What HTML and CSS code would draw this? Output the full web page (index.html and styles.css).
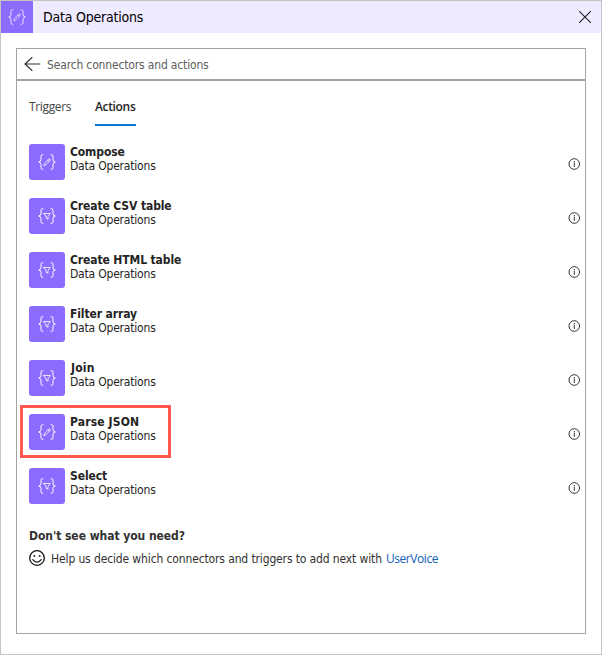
FILE: index.html
```html
<!DOCTYPE html>
<html lang="en">
<head>
<meta charset="utf-8">
<title>Data Operations</title>
<link rel="stylesheet" href="styles.css">
</head>
<body>
<svg class="defs" width="0" height="0" aria-hidden="true">
  <symbol id="braces" viewBox="0 0 18 16"><path d="M5 .7H4.500Q3 .7 3 2.300V5.500Q3 7.700.7 8Q3 8.300 3 10.500V13.700Q3 15.300 4.500 15.300H5M13 .7H13.500Q15 .7 15 2.300V5.500Q15 7.700 17.300 8Q15 8.300 15 10.500V13.700Q15 15.300 13.500 15.300H13"/></symbol>
  <symbol id="pen" viewBox="0 0 18 16"><use href="#braces"/><path class="thin" d="M6 11.400L6.600 9.300L10.800 5.100Q11.500 4.500 12.100 5.100Q12.700 5.800 12.100 6.500L7.900 10.700ZM10 5.900L11.300 7.200"/></symbol>
  <symbol id="filter" viewBox="0 0 18 16"><use href="#braces"/><path class="thin" d="M5.700 5.500H12.300L10 8.400V11.300L8 10.200V8.400Z"/></symbol>
  <symbol id="info" viewBox="0 0 12 12"><circle cx="6.300" cy="6" r="5.300"/><path d="M6.300 5.300V8.500M6.300 3.400V4"/></symbol>
</svg>
<div class="panel">
  <header class="header">
    <div class="logo"><svg class="glyph" width="18" height="16"><use href="#pen"/></svg></div>
    <h1 class="title">Data Operations</h1>
    <svg class="close" width="12" height="12" viewBox="0 0 12 12"><path d="M.4.4L11.600 11.600M11.600.4L.4 11.600"/></svg>
  </header>
  <main class="card">
    <div class="search">
      <svg class="back" width="17" height="16" viewBox="0 0 17 16"><path d="M15.800 8H1M8 1.500L1 8L8 14.500"/></svg>
      <span class="placeholder">Search connectors and actions</span>
    </div>
    <nav class="tabs"><span class="tab triggers">Triggers</span><span class="tab active">Actions</span></nav>
    <ul class="list">
      <li class="row"><div class="tile"><svg class="glyph" width="18" height="16"><use href="#pen"/></svg></div><div class="text"><b class="name">Compose</b><span class="sub">Data Operations</span></div><svg class="info" width="12" height="12"><use href="#info"/></svg></li>
      <li class="row"><div class="tile"><svg class="glyph" width="18" height="16"><use href="#filter"/></svg></div><div class="text"><b class="name">Create CSV table</b><span class="sub">Data Operations</span></div><svg class="info" width="12" height="12"><use href="#info"/></svg></li>
      <li class="row"><div class="tile"><svg class="glyph" width="18" height="16"><use href="#filter"/></svg></div><div class="text"><b class="name">Create HTML table</b><span class="sub">Data Operations</span></div><svg class="info" width="12" height="12"><use href="#info"/></svg></li>
      <li class="row"><div class="tile"><svg class="glyph" width="18" height="16"><use href="#filter"/></svg></div><div class="text"><b class="name">Filter array</b><span class="sub">Data Operations</span></div><svg class="info" width="12" height="12"><use href="#info"/></svg></li>
      <li class="row"><div class="tile"><svg class="glyph" width="18" height="16"><use href="#filter"/></svg></div><div class="text"><b class="name join">Join</b><span class="sub">Data Operations</span></div><svg class="info" width="12" height="12"><use href="#info"/></svg></li>
      <li class="row marked"><div class="tile"><svg class="glyph" width="18" height="16"><use href="#pen"/></svg></div><div class="text"><b class="name wide">Parse JSON</b><span class="sub">Data Operations</span></div><svg class="info" width="12" height="12"><use href="#info"/></svg></li>
      <li class="row"><div class="tile"><svg class="glyph" width="18" height="16"><use href="#filter"/></svg></div><div class="text"><b class="name">Select</b><span class="sub">Data Operations</span></div><svg class="info" width="12" height="12"><use href="#info"/></svg></li>
    </ul>
    <section class="help">
      <h2 class="question">Don't see what you need?</h2>
      <p class="vote"><svg class="smile" width="16" height="16" viewBox="0 0 16 16"><circle cx="8" cy="8" r="7.300"/><path d="M3.800 9.700Q8 14.600 12.200 9.700"/><circle class="eye" cx="5.300" cy="5.900" r=".9"/><circle class="eye" cx="10.700" cy="5.900" r=".9"/></svg><span class="ask">Help us decide which connectors and triggers to add next with</span><a class="link">UserVoice</a></p>
    </section>
  </main>
</div>
</body>
</html>
```
FILE: styles.css
```css
* { box-sizing: border-box; margin: 0; padding: 0; }
body {
  font-family: "DejaVu Sans Condensed", "DejaVu Sans", sans-serif;
  font-stretch: condensed;
  font-size: 12px;
  color: #252423;
  background: #fff;
}
svg { display: block; flex: none; fill: none; stroke-linecap: round; stroke-linejoin: round; }
.defs { position: absolute; }
.panel { width: 602px; height: 655px; border: 1px solid #c4c4c4; }
.header { display: flex; align-items: center; height: 32px; background: #eeeaff; padding-right: 10px; }
.logo { display: grid; place-items: center; width: 32px; height: 32px; background: #8c6cff; }
.glyph { stroke: #fff; stroke-width: 1; }
.logo .glyph { opacity: .8; }
.thin { stroke-width: .8; }
.title { flex: 1; margin-left: 10px; font-size: 14px; font-weight: 400; color: #000; line-height: 32px; letter-spacing: -.22px; white-space: nowrap; }
.close { stroke: #222; stroke-width: 1.1; }
.card { width: 570px; height: 586px; margin: 15px 0 0 15px; border: 1px solid #a3a3a3; }
.search { display: flex; align-items: center; height: 32px; padding-left: 7px; border-bottom: 2px solid #a3a3a3; }
.back { stroke: #333; stroke-width: 1.1; }
.placeholder { margin: 2px 0 0 6px; color: #605e5c; line-height: 30px; letter-spacing: -.16px; white-space: nowrap; }
.tabs { display: flex; gap: 24px; height: 45px; padding-left: 12px; font-family: "Open Sans", "Noto Sans", sans-serif; font-stretch: normal; }
.tab { height: 45px; padding-top: 17px; line-height: 18px; letter-spacing: -.34px; white-space: nowrap; }
.triggers { width: 42px; color: #444; }
.active { width: 41px; font-weight: 600; border-bottom: 2px solid #0078d4; }
.list { list-style: none; padding: 9px 5px 0 3px; }
.row { position: relative; display: flex; align-items: center; height: 54px; padding-left: 9px; }
.tile { display: grid; place-items: center; width: 36px; height: 36px; border-radius: 3px; background: #8c6cff; }
.text { display: flex; flex: 1; flex-direction: column; margin: -6px 0 0 5px; }
.name, .sub { line-height: 14px; white-space: nowrap; }
.name { letter-spacing: -.11px; }
.name.wide { letter-spacing: .15px; }
.name.join { padding-left: 1px; letter-spacing: .2px; }
.sub { letter-spacing: -.2px; }
.info { margin-top: 3px; stroke: #333; stroke-width: 1; }
.marked::before { content: ""; box-sizing: border-box; position: absolute; left: 0; top: 0; width: 151px; height: 53px; border: 3px solid #ff594f; }
.help { padding: 15px 0 0 12px; }
.question { font-size: 12px; line-height: 16px; letter-spacing: -.05px; color: #323130; }
.vote { display: flex; align-items: center; margin-top: 7px; color: #323130; line-height: 16px; white-space: nowrap; }
.smile { margin: -1px 0 1px; stroke: #111; stroke-width: 1.3; }
.smile .eye { fill: #111; stroke: none; }
.ask { margin-left: 6px; letter-spacing: -.13px; }
.link { margin-left: 4px; color: #1160b7; font-family: "Open Sans", "Noto Sans", sans-serif; font-stretch: normal; letter-spacing: -.42px; }
```
